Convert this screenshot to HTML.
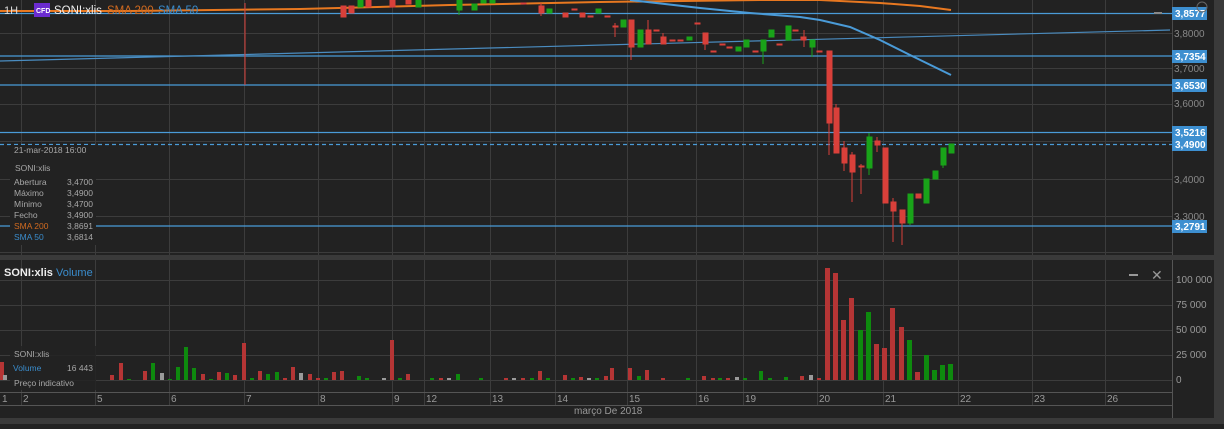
<!DOCTYPE html>
<html><head><meta charset="utf-8"><style>
html,body{margin:0;padding:0;background:#222;}
body{width:1224px;height:424px;overflow:hidden;font-family:"Liberation Sans",sans-serif;}
svg text{font-family:"Liberation Sans",sans-serif;}
</style></head><body>
<svg width="1224" height="424" xmlns="http://www.w3.org/2000/svg">
<rect width="1224" height="424" fill="#222"/>
<g stroke="#3c3c3c" stroke-width="1">
<line x1="21.5" y1="0" x2="21.5" y2="405"/><line x1="95.5" y1="0" x2="95.5" y2="405"/><line x1="169.5" y1="0" x2="169.5" y2="405"/><line x1="244.5" y1="0" x2="244.5" y2="405"/><line x1="318.5" y1="0" x2="318.5" y2="405"/><line x1="392.5" y1="0" x2="392.5" y2="405"/><line x1="424.5" y1="0" x2="424.5" y2="405"/><line x1="490.5" y1="0" x2="490.5" y2="405"/><line x1="555.5" y1="0" x2="555.5" y2="405"/><line x1="627.5" y1="0" x2="627.5" y2="405"/><line x1="696.5" y1="0" x2="696.5" y2="405"/><line x1="743.5" y1="0" x2="743.5" y2="405"/><line x1="817.5" y1="0" x2="817.5" y2="405"/><line x1="883.5" y1="0" x2="883.5" y2="405"/><line x1="958.5" y1="0" x2="958.5" y2="405"/><line x1="1032.5" y1="0" x2="1032.5" y2="405"/><line x1="1105.5" y1="0" x2="1105.5" y2="405"/>
<line x1="0" y1="33.5" x2="1172" y2="33.5"/><line x1="0" y1="68.5" x2="1172" y2="68.5"/><line x1="0" y1="104.5" x2="1172" y2="104.5"/><line x1="0" y1="141.5" x2="1172" y2="141.5"/><line x1="0" y1="179.5" x2="1172" y2="179.5"/><line x1="0" y1="216.5" x2="1172" y2="216.5"/><line x1="0" y1="252.5" x2="1172" y2="252.5"/>
<line x1="0" y1="280.5" x2="1172" y2="280.5"/><line x1="0" y1="305.5" x2="1172" y2="305.5"/><line x1="0" y1="330.5" x2="1172" y2="330.5"/><line x1="0" y1="355.5" x2="1172" y2="355.5"/><line x1="0" y1="380.5" x2="1172" y2="380.5"/>
<line x1="0" y1="392.5" x2="1172" y2="392.5" stroke="#555"/><line x1="0" y1="405.5" x2="1172" y2="405.5" stroke="#555"/>
<line x1="1172.5" y1="0" x2="1172.5" y2="255" stroke="#4a4a4a"/>
<line x1="1172.5" y1="260" x2="1172.5" y2="418" stroke="#555"/>
</g>
<rect x="0" y="255" width="1224" height="5" fill="#3a3a3a"/>
<rect x="0" y="418" width="1224" height="6" fill="#3a3a3a"/>
<rect x="1214" y="0" width="10" height="424" fill="#3a3a3a"/>
<g stroke="#4a9bd8" stroke-width="1.2">
<line x1="0" y1="13.5" x2="1172" y2="13.5"/><line x1="0" y1="56" x2="1172" y2="56"/><line x1="0" y1="85" x2="1172" y2="85"/><line x1="0" y1="132.5" x2="1172" y2="132.5"/><line x1="0" y1="226" x2="1172" y2="226"/>
<line x1="0" y1="144.5" x2="1172" y2="144.5" stroke-dasharray="4,3"/>
<line x1="0" y1="61" x2="1170" y2="30" stroke="#4a8cc0"/>
</g>
<path d="M0 11 L130 11 L300 9 L450 5 L600 2 L760 0 L820 0 L880 3 L920 6 L951 10" stroke="#e87820" stroke-width="2" fill="none"/>
<path d="M630 0 L700 8 L750 13 L800 17 L820 20 L850 27 L880 40 L910 55 L951 75" stroke="#4a9bd8" stroke-width="2" fill="none"/>
<g fill="#d9403a" stroke="#d9403a">
<line x1="245" y1="3" x2="245" y2="85"/>
<rect x="341" y="6" width="5" height="11"/><rect x="349" y="6" width="5" height="7"/><rect x="366" y="0" width="5" height="7"/><rect x="390" y="0" width="5" height="7"/><rect x="406" y="0" width="5" height="4"/>
<rect x="521" y="3" width="5" height="1"/>
<line x1="541" y1="3" x2="541" y2="16"/><rect x="539" y="6" width="5" height="7"/>
<rect x="563" y="13" width="5" height="4"/><rect x="572" y="9" width="5" height="1"/><rect x="580" y="13" width="5" height="4"/><rect x="588" y="16" width="5" height="1"/><rect x="605" y="16" width="5" height="1"/>
<line x1="615" y1="23" x2="615" y2="37"/><rect x="613" y="26" width="5" height="1"/>
<line x1="631" y1="20" x2="631" y2="60"/><rect x="629" y="20" width="5" height="27"/>
<line x1="648" y1="20" x2="648" y2="44"/><rect x="646" y="30" width="5" height="14"/>
<rect x="654" y="30" width="5" height="1"/>
<line x1="663" y1="33" x2="663" y2="44"/><rect x="661" y="37" width="5" height="7"/>
<rect x="670" y="40" width="5" height="1"/><rect x="678" y="40" width="5" height="1"/><rect x="695" y="23" width="5" height="1"/>
<line x1="705" y1="33" x2="705" y2="50"/><rect x="703" y="33" width="5" height="11"/>
<rect x="711" y="51" width="5" height="1"/><rect x="720" y="44" width="5" height="1"/><rect x="727" y="47" width="5" height="1"/><rect x="753" y="51" width="5" height="1"/><rect x="777" y="44" width="5" height="1"/><rect x="793" y="30" width="5" height="1"/>
<line x1="804" y1="30" x2="804" y2="47"/><rect x="801" y="37" width="5" height="3"/>
<rect x="817" y="51" width="5" height="1"/>
<line x1="829" y1="51" x2="829" y2="155"/><rect x="827" y="51" width="5" height="72"/>
<line x1="836" y1="104" x2="836" y2="153"/><rect x="834" y="108" width="5" height="45"/>
<line x1="844" y1="141" x2="844" y2="171"/><rect x="842" y="148" width="5" height="15"/>
<line x1="852" y1="152" x2="852" y2="202"/><rect x="850" y="155" width="5" height="17"/>
<line x1="861" y1="164" x2="861" y2="194"/><rect x="859" y="166" width="5" height="1"/>
<line x1="877" y1="137" x2="877" y2="152"/><rect x="875" y="141" width="5" height="4"/>
<rect x="883" y="148" width="5" height="55"/>
<line x1="893" y1="198" x2="893" y2="242"/><rect x="891" y="202" width="5" height="9"/>
<line x1="902" y1="210" x2="902" y2="245"/><rect x="900" y="210" width="5" height="13"/>
<rect x="916" y="194" width="5" height="4"/>
</g>
<g fill="#19a319" stroke="#19a319">
<rect x="358" y="0" width="5" height="7"/><rect x="416" y="0" width="5" height="7"/>
<line x1="459" y1="0" x2="459" y2="15"/><rect x="457" y="0" width="5" height="10"/>
<rect x="472" y="4" width="5" height="6"/><rect x="481" y="0" width="5" height="3"/><rect x="490" y="0" width="5" height="3"/>
<rect x="547" y="9" width="5" height="4"/><rect x="596" y="9" width="5" height="4"/><rect x="621" y="20" width="5" height="7"/>
<rect x="638" y="30" width="5" height="17"/><rect x="687" y="37" width="5" height="3"/>
<rect x="736" y="47" width="5" height="4"/><rect x="744" y="40" width="5" height="7"/>
<line x1="763" y1="40" x2="763" y2="64"/><rect x="761" y="40" width="5" height="11"/>
<rect x="769" y="30" width="5" height="7"/><rect x="786" y="26" width="5" height="14"/>
<line x1="812" y1="40" x2="812" y2="57"/><rect x="810" y="40" width="5" height="7"/>
<line x1="869" y1="133" x2="869" y2="175"/><rect x="867" y="137" width="5" height="31"/>
<line x1="910" y1="194" x2="910" y2="225"/><rect x="908" y="194" width="5" height="29"/>
<rect x="924" y="179" width="5" height="24"/><rect x="933" y="171" width="5" height="8"/>
<line x1="943" y1="148" x2="943" y2="168"/><rect x="941" y="148" width="5" height="17"/>
<rect x="949" y="144" width="5" height="9"/>
</g>
<g fill="#b53535">
<rect x="0" y="362" width="4" height="18"/><rect x="110" y="375" width="4" height="5"/><rect x="119" y="363" width="4" height="17"/><rect x="143" y="371" width="4" height="9"/><rect x="201" y="374" width="4" height="6"/><rect x="217" y="372" width="4" height="8"/><rect x="233" y="375" width="4" height="5"/><rect x="242" y="343" width="4" height="37"/><rect x="258" y="371" width="4" height="9"/><rect x="283" y="378" width="4" height="2"/><rect x="291" y="367" width="4" height="13"/><rect x="308" y="374" width="4" height="6"/><rect x="316" y="378" width="4" height="2"/><rect x="332" y="372" width="4" height="8"/><rect x="340" y="371" width="4" height="9"/><rect x="390" y="340" width="4" height="40"/><rect x="406" y="374" width="4" height="6"/><rect x="439" y="378" width="4" height="2"/><rect x="504" y="378" width="4" height="2"/><rect x="521" y="378" width="4" height="2"/><rect x="538" y="371" width="4" height="9"/><rect x="563" y="375" width="4" height="5"/><rect x="579" y="377" width="4" height="3"/><rect x="604" y="376" width="4" height="4"/><rect x="610" y="368" width="4" height="12"/><rect x="628" y="368" width="4" height="12"/><rect x="645" y="370" width="4" height="10"/><rect x="661" y="378" width="4" height="2"/><rect x="702" y="376" width="4" height="4"/><rect x="711" y="378" width="4" height="2"/><rect x="726" y="378" width="4" height="2"/><rect x="800" y="376" width="4" height="4"/><rect x="817" y="378" width="4" height="2"/>
<rect x="825" y="268" width="5" height="112"/><rect x="833" y="273" width="5" height="107"/><rect x="841" y="320" width="5" height="60"/><rect x="849" y="298" width="5" height="82"/><rect x="874" y="344" width="5" height="36"/><rect x="882" y="348" width="5" height="32"/><rect x="890" y="308" width="5" height="72"/><rect x="899" y="327" width="5" height="53"/><rect x="915" y="372" width="5" height="8"/>
</g>
<g fill="#0e8a0e">
<rect x="127" y="379" width="4" height="1"/><rect x="151" y="363" width="4" height="17"/><rect x="168" y="379" width="4" height="1"/><rect x="176" y="367" width="4" height="13"/><rect x="184" y="347" width="4" height="33"/><rect x="192" y="368" width="4" height="12"/><rect x="209" y="379" width="4" height="1"/><rect x="225" y="373" width="4" height="7"/><rect x="250" y="378" width="4" height="2"/><rect x="266" y="374" width="4" height="6"/><rect x="275" y="372" width="4" height="8"/><rect x="324" y="378" width="4" height="2"/><rect x="357" y="376" width="4" height="4"/><rect x="365" y="378" width="4" height="2"/><rect x="398" y="378" width="4" height="2"/><rect x="430" y="378" width="4" height="2"/><rect x="456" y="374" width="4" height="6"/><rect x="479" y="378" width="4" height="2"/><rect x="530" y="378" width="4" height="2"/><rect x="546" y="378" width="4" height="2"/><rect x="571" y="378" width="4" height="2"/><rect x="595" y="378" width="4" height="2"/><rect x="637" y="376" width="4" height="4"/><rect x="686" y="378" width="4" height="2"/><rect x="718" y="378" width="4" height="2"/><rect x="743" y="378" width="4" height="2"/><rect x="759" y="371" width="4" height="9"/><rect x="768" y="378" width="4" height="2"/><rect x="784" y="377" width="4" height="3"/>
<rect x="858" y="330" width="5" height="50"/><rect x="866" y="312" width="5" height="68"/><rect x="907" y="340" width="5" height="40"/><rect x="924" y="355" width="5" height="25"/><rect x="932" y="370" width="5" height="10"/><rect x="940" y="365" width="5" height="15"/><rect x="948" y="364" width="5" height="16"/>
</g>
<g fill="#9a9a9a"><rect x="3" y="375" width="4" height="5"/><rect x="160" y="373" width="4" height="7"/><rect x="299" y="373" width="4" height="7"/><rect x="382" y="378" width="4" height="2"/><rect x="447" y="378" width="4" height="2"/><rect x="512" y="378" width="4" height="2"/><rect x="587" y="378" width="4" height="2"/><rect x="735" y="377" width="4" height="3"/><rect x="809" y="375" width="4" height="5"/></g>
<text x="4" y="14" fill="#ddd" font-size="11">1H</text>
<rect x="34" y="3" width="16" height="14" fill="#6b2bd0"/>
<text x="36" y="13" fill="#fff" font-size="7" font-weight="bold">CFD</text>
<text x="54" y="14" fill="#eee" font-size="11.5">SONI:xlis</text>
<text x="107" y="14" fill="#d06a20" font-size="11.5">SMA 200</text>
<text x="158" y="14" fill="#3a8ccc" font-size="11.5">SMA 50</text>
<rect x="10" y="145" width="86" height="100" fill="#222"/>
<g font-size="8.5" fill="#a8a8a8">
<text x="14" y="153">21-mar-2018 16:00</text>
<text x="15" y="171">SONI:xlis</text>
<text x="14" y="185">Abertura</text><text x="67" y="185">3,4700</text>
<text x="14" y="196">Máximo</text><text x="67" y="196">3,4900</text>
<text x="14" y="207">Mínimo</text><text x="67" y="207">3,4700</text>
<text x="14" y="218">Fecho</text><text x="67" y="218">3,4900</text>
<text x="14" y="229" fill="#d06a20">SMA 200</text><text x="67" y="229">3,8691</text>
<text x="14" y="240" fill="#3a8ccc">SMA 50</text><text x="67" y="240">3,6814</text>
</g>
<g font-size="10" fill="#888">
<text x="1174" y="37">3,8000</text><text x="1174" y="72">3,7000</text><text x="1174" y="107">3,6000</text><text x="1174" y="183">3,4000</text><text x="1174" y="220">3,3000</text>
</g>
<g fill="#3d8fd0">
<rect x="1172" y="7" width="35" height="13"/><rect x="1172" y="50" width="35" height="13"/><rect x="1172" y="79" width="35" height="13"/><rect x="1172" y="126" width="35" height="13"/><rect x="1172" y="138" width="35" height="13"/><rect x="1172" y="220" width="35" height="13"/>
</g>
<g font-size="10" fill="#fff" font-weight="bold">
<text x="1175" y="17">3,8577</text><text x="1175" y="60">3,7354</text><text x="1175" y="89">3,6530</text><text x="1175" y="136">3,5216</text><text x="1175" y="148">3,4900</text><text x="1175" y="230">3,2791</text>
</g>
<rect x="1154" y="12" width="8" height="2" fill="#888"/>
<circle cx="1202" cy="7" r="5" fill="none" stroke="#666"/>
<text x="4" y="276" fill="#eee" font-size="11" font-weight="bold">SONI:xlis</text>
<text x="56" y="276" fill="#3a8ccc" font-size="11">Volume</text>
<rect x="1129" y="274" width="9" height="2" fill="#999"/>
<text x="1151" y="280" fill="#999" font-size="14">✕</text>
<g font-size="10" fill="#999">
<text x="1176" y="283">100 000</text><text x="1176" y="308">75 000</text><text x="1176" y="333">50 000</text><text x="1176" y="358">25 000</text><text x="1176" y="383">0</text>
</g>
<rect x="10" y="346" width="86" height="44" fill="#222" opacity="0.85"/>
<g font-size="8.5" fill="#a8a8a8">
<text x="14" y="357">SONI:xlis</text>
<text x="13" y="371" fill="#3a8ccc">Volume</text><text x="67" y="371">16 443</text>
<text x="14" y="386">Preço indicativo</text>
</g>
<g font-size="10" fill="#999">
<text x="2" y="402">1</text><text x="23" y="402">2</text><text x="97" y="402">5</text><text x="171" y="402">6</text><text x="246" y="402">7</text><text x="320" y="402">8</text><text x="394" y="402">9</text><text x="426" y="402">12</text><text x="492" y="402">13</text><text x="557" y="402">14</text><text x="629" y="402">15</text><text x="698" y="402">16</text><text x="745" y="402">19</text><text x="819" y="402">20</text><text x="885" y="402">21</text><text x="960" y="402">22</text><text x="1034" y="402">23</text><text x="1107" y="402">26</text>
<text x="574" y="414">março De 2018</text>
</g>
</svg>
</body></html>
